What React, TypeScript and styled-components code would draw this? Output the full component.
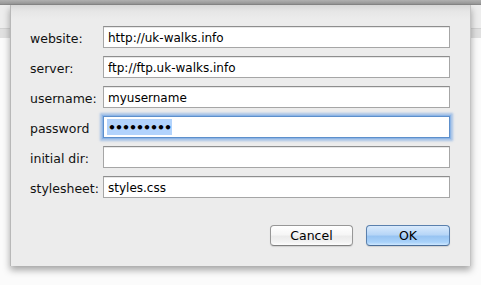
import { Fragment } from "react";
import styled, { createGlobalStyle } from "styled-components";

const GlobalStyle = createGlobalStyle`
  html, body {
    margin: 0;
    padding: 0;
    background: #fafafa;
  }
  body {
    font-family: "DejaVu Sans", "Liberation Sans", sans-serif;
  }
`;

const Screen = styled.div`
  position: relative;
  width: 481px;
  height: 285px;
  overflow: hidden;
  display: flex;
  flex-direction: column;
  background: #fafafa;
`;

const TitleBar = styled.div`
  height: 5px;
  background: linear-gradient(#b0b0b0, #9a9a9a 70%, #7f7f7f);
`;

const ToolbarBand = styled.div`
  height: 23px;
  background: #ededed;
`;

const TabStripe = styled.div`
  height: 9px;
  background: #e0e0e0;
  border-top: 1px solid #d2d2d2;
`;

const WindowBody = styled.div`
  flex: 1;
  background: #fbfbfb;
`;

const Sheet = styled.div`
  position: absolute;
  top: 5px;
  left: 10px;
  width: 461px;
  height: 261px;
  box-sizing: border-box;
  padding: 21px 20px 0 19px;
  background: linear-gradient(#d6d6d6, #e6e6e6 6px, #ececec 14px, #ececec);
  border-left: 1px solid #b8b8b8;
  border-right: 1px solid #c4c4c4;
  box-shadow: 0 4px 7px rgba(0, 0, 0, 0.35);
`;

const Form = styled.div`
  display: grid;
  grid-template-columns: 73px 1fr;
  grid-auto-rows: 22px;
  row-gap: 8px;
  align-items: center;
`;

const Label = styled.label`
  font-size: 12.5px;
  color: #111;
  padding-top: 2px;
  white-space: nowrap;
`;

const Field = styled.input`
  box-sizing: border-box;
  width: 100%;
  height: 22px;
  margin: 0;
  padding: 1px 4px 0;
  font-family: "DejaVu Sans", "Liberation Sans", sans-serif;
  font-size: 12px;
  color: #000;
  background: #fff;
  border: 1px solid #a6a6a6;
  border-top-color: #8e8e8e;
  border-radius: 0;
  outline: none;
  box-shadow: inset 0 1px 0 #e8e8e8;
`;

const FocusedField = styled.div`
  box-sizing: border-box;
  height: 22px;
  padding: 2px 3px;
  background: #fff;
  border: 1px solid #5d8fcb;
  box-shadow: 0 0 0 1px #8db5e6, 0 0 2px 3px rgba(110, 160, 225, 0.55);
  display: flex;
  align-items: center;
`;

const Selection = styled.span`
  display: inline-block;
  height: 16px;
  line-height: 17px;
  padding: 0 1px;
  background: #b2d3fc;
  font-size: 12.5px;
  font-weight: bold;
  letter-spacing: -1px;
  color: #000;
`;

const ButtonRow = styled.div`
  margin-top: 27px;
  display: flex;
  justify-content: flex-end;
  gap: 13px;
`;

const Button = styled.button<{ $primary?: boolean; $width: number }>`
  box-sizing: border-box;
  width: ${(p) => p.$width}px;
  height: 21px;
  margin: 0;
  padding: 0 0 1px;
  font-family: "DejaVu Sans", "Liberation Sans", sans-serif;
  font-size: 12.5px;
  color: #000;
  border-radius: 4px;
  border: 1px solid ${(p) => (p.$primary ? "#5a80ad" : "#979797")};
  border-bottom-color: ${(p) => (p.$primary ? "#4a6d98" : "#7f7f7f")};
  background: ${(p) =>
    p.$primary
      ? "linear-gradient(#d9eafc, #b7d6f7 45%, #98c4f2 55%, #a9d2fa 85%, #cfe8ff)"
      : "linear-gradient(#ffffff, #f6f6f6 45%, #ebebeb 55%, #f3f3f3 85%, #fdfdfd)"};
  box-shadow: 0 1px 1px rgba(0, 0, 0, 0.12);
`;

const fields = [
  { label: "website:", value: "http://uk-walks.info" },
  { label: "server:", value: "ftp://ftp.uk-walks.info" },
  { label: "username:", value: "myusername" },
  { label: "password", value: "", focused: true },
  { label: "initial dir:", value: "" },
  { label: "stylesheet:", value: "styles.css" },
];

export default function App() {
  return (
    <>
      <GlobalStyle />
      <Screen>
        <TitleBar />
        <ToolbarBand />
        <TabStripe />
        <WindowBody />
        <Sheet>
          <Form>
            {fields.map((f) => (
              <Fragment key={f.label}>
                <Label>{f.label}</Label>
                {f.focused ? (
                  <FocusedField>
                    <Selection>•••••••••</Selection>
                  </FocusedField>
                ) : (
                  <Field readOnly value={f.value} />
                )}
              </Fragment>
            ))}
          </Form>
          <ButtonRow>
            <Button $width={83}>Cancel</Button>
            <Button $width={84} $primary>
              OK
            </Button>
          </ButtonRow>
        </Sheet>
      </Screen>
    </>
  );
}
